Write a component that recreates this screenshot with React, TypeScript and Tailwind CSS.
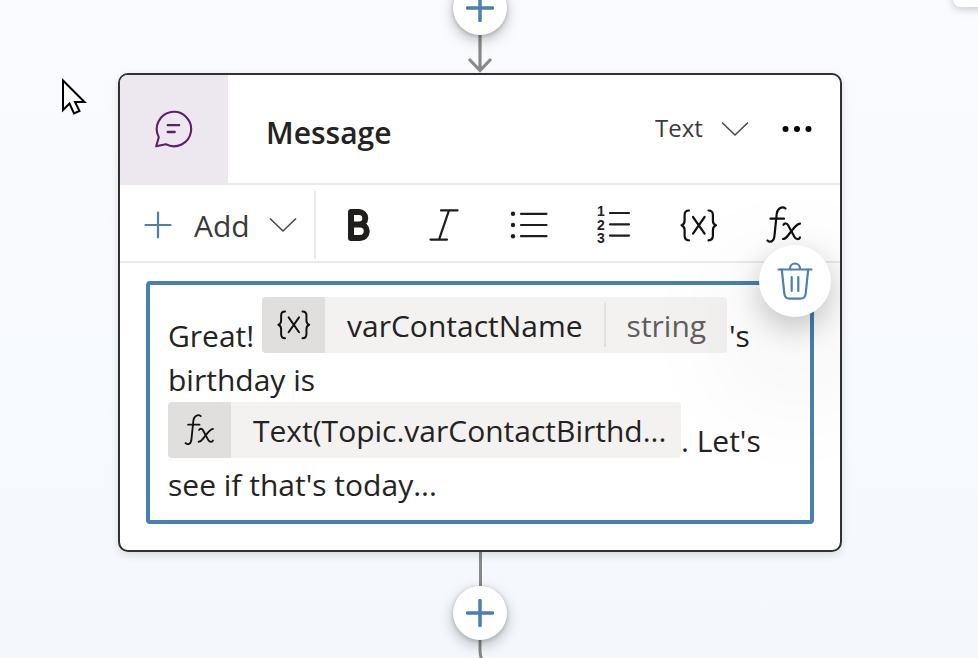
import type { ReactNode } from "react";

type IconProps = { className?: string };

function PlusIcon({ weight }: { weight: number }) {
  return (
    <svg viewBox="0 0 28 28" className="size-7" fill="none" stroke="#4a7fae" strokeWidth={weight} strokeLinecap="round" aria-hidden="true">
      <path d="M14 1.5v25M1.5 14h25" />
    </svg>
  );
}

function ChevronIcon({ className = "" }: IconProps) {
  return (
    <svg viewBox="0 0 28 16" className={`h-4 w-7 ${className}`} fill="none" stroke="#4b4a48" strokeWidth="1.6" aria-hidden="true">
      <path d="M1 1.5 14 14 27 1.5" />
    </svg>
  );
}

function MessageIcon() {
  return (
    <svg viewBox="0 0 38 38" className="size-[38px]" fill="none" stroke="#5c1f69" strokeWidth="2.1" strokeLinejoin="round" strokeLinecap="round" aria-hidden="true">
      <path d="M1.2 36.2 3.8 27.2A17.2 17.2 0 1 1 10.8 34.2Z" />
      <path d="M12.7 15.2h11.5M12.7 22h7" strokeWidth="2.3" />
    </svg>
  );
}

function BoldIcon() {
  return (
    <svg viewBox="0 0 24 34" className="h-[34px] w-6" fill="none" stroke="#1f1e1d" strokeWidth="6" strokeLinejoin="round" aria-hidden="true">
      <path d="M4 4h8a6 6 0 0 1 0 12.5H4zM4 16.5h9a6.5 6.5 0 0 1 0 13.5H4z" />
    </svg>
  );
}

function ItalicIcon() {
  return (
    <svg viewBox="0 0 30 34" className="h-[34px] w-[30px]" fill="none" stroke="#1f1e1d" strokeWidth="2.2" strokeLinecap="round" aria-hidden="true">
      <path d="M12 2.4h16.5M1.5 31.6H18M20 2.4 10 31.6" />
    </svg>
  );
}

function BulletListIcon() {
  return (
    <svg viewBox="0 0 38 28" className="h-7 w-[38px]" fill="none" stroke="#1f1e1d" strokeWidth="2.2" strokeLinecap="round" aria-hidden="true">
      <path d="M11 2.8h25.5M11 14h25.5M11 25.2h25.5" />
      <g fill="#1f1e1d" stroke="none">
        <circle cx="3" cy="2.8" r="2.2" />
        <circle cx="3" cy="14" r="2.2" />
        <circle cx="3" cy="25.2" r="2.2" />
      </g>
    </svg>
  );
}

function NumberListIcon() {
  return (
    <svg viewBox="0 0 36 48" className="h-12 w-9" aria-hidden="true">
      <g fill="#1f1e1d" className="font-['Liberation_Sans',Arial,sans-serif] text-[14px] font-bold">
        <text x="1" y="15">1</text>
        <text x="1" y="29">2</text>
        <text x="1" y="42">3</text>
      </g>
      <path d="M14 12h19M14 23.3h19M14 34.6h19" fill="none" stroke="#1f1e1d" strokeWidth="2.2" strokeLinecap="round" />
    </svg>
  );
}

function VariableIcon({ className = "h-[33px] w-[38px]" }: IconProps) {
  return (
    <svg viewBox="0 0 38 33" className={className} fill="none" stroke="#111" strokeWidth="2.2" strokeLinecap="round" strokeLinejoin="round" aria-hidden="true">
      <path d="M9 1.5C5.8 1.5 4.6 3 4.6 6v5.5C4.6 14 3.6 15.5 1.5 16.2 3.6 17 4.6 18.5 4.6 21v5.5C4.6 29.8 5.8 31.3 9 31.3" />
      <path d="M28.5 1.5C31.7 1.5 32.9 3 32.9 6v5.5C32.9 14 33.9 15.5 36 16.2 33.9 17 32.9 18.5 32.9 21v5.5C32.9 29.8 31.7 31.3 28.5 31.3" />
      <path d="M13 8 24.6 24.6M24.6 8 13 24.6" />
    </svg>
  );
}

function FormulaIcon({ className = "h-[38px] w-9" }: IconProps) {
  return (
    <svg viewBox="0 0 36 38" className={className} fill="none" stroke="#111" strokeWidth="2.2" strokeLinecap="round" strokeLinejoin="round" aria-hidden="true">
      <path d="M1.5 34.5C3.5 36.5 8 36.5 8.5 29.5L10.7 8C11.3 2 16.5 0 19.5 2.5" />
      <path d="M4.5 12.7h13.5" />
      <path d="M17.5 18.8C18.5 17 20.8 17 22 19L28.5 31C29.8 33.5 33 33.7 34 31.5" />
      <path d="M34 17.6C31 18 29.5 20 25.5 25L22 29.5C20.5 31.5 19 33 17 33" />
    </svg>
  );
}

function TrashIcon() {
  return (
    <svg viewBox="0 0 36 38" className="h-[38px] w-9" fill="none" stroke="#4a7fae" strokeWidth="2.2" strokeLinecap="round" strokeLinejoin="round" aria-hidden="true">
      <path d="M1.5 7.5h33M13 7.5V6.5a5 5 0 0 1 10 0v1" />
      <path d="M4.8 7.5 7.3 31.5C7.7 35 9.5 36.7 12.8 36.7h10.4c3.3 0 5.1-1.7 5.5-5.2L31.2 7.5" />
      <path d="M14.7 15v14M21.3 15v14" />
    </svg>
  );
}

function AddNodeButton({ label }: { label: string }) {
  return (
    <button type="button" aria-label={label} className="relative flex size-[54px] shrink-0 items-center justify-center rounded-full bg-white shadow-[0_5px_14px_rgba(0,0,0,0.26),0_1px_4px_rgba(0,0,0,0.2)]">
      <PlusIcon weight={3.5} />
    </button>
  );
}

function ToolButton({ label, children }: { label: string; children: ReactNode }) {
  return (
    <button type="button" aria-label={label} className="flex flex-1 items-center justify-center">
      {children}
    </button>
  );
}

function Chip({ icon, text, type }: { icon: ReactNode; text: string; type?: string }) {
  return (
    <span contentEditable={false} className="inline-block h-14 max-w-[513px] overflow-hidden rounded-sm bg-[#f3f2f1] align-[-6px]">
      <span className="flex h-full items-center">
        <span className="flex h-full w-[63px] shrink-0 items-center justify-center bg-[#e0dfde]">{icon}</span>
        <span className="pt-0.5 pl-[22px] whitespace-nowrap">{text}</span>
        {type ? (
          <span className="ml-[21px] flex h-11 items-center border-l-2 border-[#e1dfdd] px-[21px] pt-0.5 text-[#605e5c]">{type}</span>
        ) : (
          <span className="w-[22px]" />
        )}
      </span>
    </span>
  );
}

export default function App() {
  return (
    <main className="relative min-h-screen overflow-hidden bg-linear-to-b from-[#fafbff] to-[#f4f8fc] pr-[18px] font-['Open_Sans','Noto_Sans',sans-serif] text-[#242322]">
      <div className="absolute -top-8 -right-8 h-[39px] w-[57px] rounded-lg bg-white shadow-[0_2px_8px_rgba(0,0,0,0.22)]" />

      <svg viewBox="0 0 26 37" className="absolute top-[78px] left-[61px] h-[37px] w-[26px]" fill="#fff" stroke="#000" strokeWidth="2" aria-hidden="true">
        <path d="M2 2.5V32l6.5-6.5 4.5 10 5.5-2.5-4.5-9h9.5z" />
      </svg>

      <div className="-mt-[19px] flex flex-col items-center">
        <AddNodeButton label="Add node above" />
        <svg viewBox="0 0 28 38" className="h-[38px] w-7" fill="none" stroke="#8a8886" strokeWidth="3.2" aria-hidden="true">
          <path d="M14 0v35M3 24l11 11.5L25 24" />
        </svg>

        <section aria-label="Message node" className="relative w-full max-w-[724px] rounded-[10px] border-2 border-[#323130] bg-white shadow-[0_3px_8px_rgba(0,0,0,0.12)]">
          <header className="flex h-[110px] items-center border-b-2 border-[#eaeaea]">
            <div className="flex size-[108px] items-center justify-center rounded-tl-lg bg-[#ede8ef]">
              <MessageIcon />
            </div>
            <h2 className="flex-1 pt-1.5 pl-[38px] text-[30px] font-semibold">Message</h2>
            <div className="relative flex items-center">
              <select aria-label="Message type" className="w-[94px] appearance-none bg-transparent pb-0.5 text-[24px] text-[#3b3a39]">
                <option>Text</option>
              </select>
              <ChevronIcon className="pointer-events-none absolute right-0" />
            </div>
            <button type="button" aria-label="More options" className="mr-7 ml-[33px]">
              <svg viewBox="0 0 30 8" className="h-2 w-[30px]" aria-hidden="true">
                <circle cx="3.5" cy="4" r="3" />
                <circle cx="15" cy="4" r="3" />
                <circle cx="26.5" cy="4" r="3" />
              </svg>
            </button>
          </header>

          <div role="toolbar" aria-label="Formatting" className="flex h-[78px] border-b-2 border-[#eaeaea] pt-1 pr-3.5">
            <button type="button" className="my-0.5 flex w-[196px] items-center border-r-2 border-[#eaeaea] pl-6 text-[30px] text-[#3b3a39]">
              <PlusIcon weight={2.2} />
              <span className="flex-1 pl-[22px] text-left">Add</span>
              <ChevronIcon className="mr-[17px]" />
            </button>
            <ToolButton label="Bold"><BoldIcon /></ToolButton>
            <ToolButton label="Italic"><ItalicIcon /></ToolButton>
            <ToolButton label="Bulleted list"><BulletListIcon /></ToolButton>
            <ToolButton label="Numbered list"><NumberListIcon /></ToolButton>
            <ToolButton label="Insert variable"><VariableIcon /></ToolButton>
            <ToolButton label="Insert formula"><FormulaIcon /></ToolButton>
          </div>

          <div
            role="textbox"
            aria-label="Message text"
            aria-multiline="true"
            contentEditable
            suppressContentEditableWarning
            className="mx-[26px] mt-[18px] mb-[26px] rounded-sm border-4 border-[#4a7fae] px-[18px] pt-3 pb-[13px] text-[30px] leading-[44px]"
          >
            <span>Great!</span>{" "}
            <Chip icon={<VariableIcon className="h-[30px] w-[34px]" />} text="varContactName" type="string" />{" "}
            <span className="-ml-1.5">'s</span> <span>birthday is</span>{" "}
            <Chip icon={<FormulaIcon className="h-8 w-[31px]" />} text="Text(Topic.varContactBirthd..." />
            <span>. Let's</span> <span>see if that's today...</span>
          </div>

          {/* The overlay clips the floating button's wide shadow to the card. */}
          <div className="pointer-events-none absolute inset-0 overflow-hidden rounded-lg">
            <button type="button" aria-label="Delete" className="pointer-events-auto absolute top-[170px] right-[9px] flex size-[72px] items-center justify-center rounded-full bg-white shadow-[0_50px_120px_20px_rgba(0,0,0,0.08),0_10px_30px_rgba(0,0,0,0.22)]">
              <TrashIcon />
            </button>
          </div>
        </section>

        <div className="h-[34px] w-[3px] bg-[#8a8886]" />
        <AddNodeButton label="Add node below" />
        <svg viewBox="0 0 16 18" className="h-[18px] w-4" fill="none" stroke="#8a8886" strokeWidth="3" aria-hidden="true">
          <path d="M8 0v10q0 6 2.5 12" />
        </svg>
      </div>
    </main>
  );
}
